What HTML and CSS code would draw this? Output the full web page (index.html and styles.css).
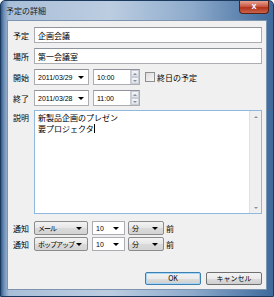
FILE: index.html
```html
<!DOCTYPE html>
<html lang="ja">
<head>
    <meta charset="UTF-8">
    <title>予定の詳細</title>
    <link rel="stylesheet" href="styles.css">
</head>
<body>
    <div class="window">
        <div class="titlebar">
            <span class="title">予定の詳細</span>
            <span class="close">x</span>
        </div>
        <div class="client">
            <div class="row">
                <span class="label">予定</span>
                <div class="field wide">企画会議</div>
            </div>
            <div class="row">
                <span class="label">場所</span>
                <div class="field wide">第一会議室</div>
            </div>
            <div class="row">
                <span class="label">開始</span>
                <div class="field date">2011/03/29<span class="arrow"></span></div>
                <div class="field time">10:00<span class="spin"><i class="up"></i><i class="down"></i></span></div>
                <span class="check"></span>
                <span class="check-label">終日の予定</span>
            </div>
            <div class="row">
                <span class="label">終了</span>
                <div class="field date">2011/03/28<span class="arrow"></span></div>
                <div class="field time">11:00<span class="spin"><i class="up"></i><i class="down"></i></span></div>
            </div>
            <div class="row memo-row">
                <span class="label">説明</span>
                <div class="memo">
                    <div class="memo-text">新製品企画のプレゼン<br>要プロジェクタ<span class="caret"></span></div>
                    <div class="scroll"><i class="up"></i><i class="down"></i></div>
                </div>
            </div>
            <div class="row notify">
                <span class="label">通知</span>
                <div class="select kind">メール<span class="arrow"></span></div>
                <div class="select num">10<span class="arrow"></span></div>
                <div class="select unit">分<span class="arrow"></span></div>
                <span class="before">前</span>
            </div>
            <div class="row notify">
                <span class="label">通知</span>
                <div class="select kind">ポップアップ<span class="arrow"></span></div>
                <div class="select num">10<span class="arrow"></span></div>
                <div class="select unit">分<span class="arrow"></span></div>
                <span class="before">前</span>
            </div>
            <div class="buttons">
                <button class="btn default">OK</button>
                <button class="btn">キャンセル</button>
            </div>
        </div>
    </div>
</body>
</html>
```

FILE: styles.css
```css
body {
    margin: 0;
    font-family: "Noto Sans CJK JP", "Liberation Sans", sans-serif;
    font-size: 8px;
    color: #000;
}
.window {
    width: 274px;
    height: 297px;
    box-sizing: border-box;
    display: flex;
    flex-direction: column;
    background: linear-gradient(90deg, #2f5d92 0, #6f8fb5 3px, #a9bfd8 8px, #bccde1 40%, #8eabcc 70%, #3f6a9c 100%);
    border: 1px solid #1b3a5e;
    border-radius: 5px 5px 0 0;
}
.titlebar {
    height: 19px;
    display: flex;
    justify-content: space-between;
    align-items: flex-start;
    padding: 0 4px 0 5px;
}
.title {
    margin-top: 4px;
    color: #1a1a1a;
    font-size: 8px;
}
.close {
    width: 30px;
    height: 13px;
    line-height: 11px;
    text-align: center;
    color: #fff;
    font-family: "Liberation Sans", sans-serif;
    font-weight: bold;
    font-size: 9px;
    background: linear-gradient(#e7a391, #c85a44 45%, #b3321b 55%, #c9654c);
    border: 1px solid #5b1f14;
    border-top: none;
    border-radius: 0 0 4px 4px;
    box-sizing: border-box;
}
.client {
    flex: 1;
    margin: 0 6px 6px 6px;
    background: #f0f0f0;
    border: 1px solid #7c94b0;
    display: flex;
    flex-direction: column;
    padding: 6px 4px 4px 5px;
}
.row {
    display: flex;
    align-items: center;
    height: 16px;
    margin-bottom: 5px;
    white-space: nowrap;
}
.label {
    width: 21px;
    flex: none;
}
.field {
    height: 16px;
    box-sizing: border-box;
    background: #fff;
    border: 1px solid #abadb3;
    border-top-color: #8f949c;
    display: flex;
    align-items: center;
    padding-left: 3px;
    font-family: "Liberation Sans", "Noto Sans CJK JP", sans-serif;
    font-size: 7px;
}
.wide {
    width: 228px;
    font-family: "Noto Sans CJK JP", sans-serif;
    font-size: 8px;
}
.date {
    width: 55px;
    justify-content: space-between;
    padding-right: 4px;
}
.time {
    width: 47px;
    margin-left: 4px;
    justify-content: space-between;
    padding-right: 0;
}
.arrow {
    width: 0;
    height: 0;
    flex: none;
    border-left: 3px solid transparent;
    border-right: 3px solid transparent;
    border-top: 3px solid #000;
}
.spin {
    width: 8px;
    height: 14px;
    display: flex;
    flex-direction: column;
    border-left: 1px solid #c8ccd2;
}
.spin i, .scroll i {
    flex: 1;
    background: linear-gradient(#f4f6f8, #dfe3e8);
    border: 1px solid #c9ced6;
    position: relative;
}
.spin i::after, .scroll i::after {
    content: "";
    position: absolute;
    left: 50%;
    top: 50%;
    margin: -1px 0 0 -2px;
    border-left: 2px solid transparent;
    border-right: 2px solid transparent;
}
.spin .up::after, .scroll .up::after {
    border-bottom: 2px solid #8a9099;
}
.spin .down::after, .scroll .down::after {
    border-top: 2px solid #8a9099;
}
.check {
    width: 8px;
    height: 8px;
    margin-left: 5px;
    border: 1px solid #8e8f8f;
    background: linear-gradient(135deg, #dcdcdc, #f6f6f6);
}
.check-label {
    margin-left: 2px;
}
.memo-row {
    height: 104px;
    align-items: flex-start;
    margin-top: -1px;
    margin-bottom: 7px;
}
.memo-row .label {
    margin-top: 2px;
}
.memo {
    width: 228px;
    height: 104px;
    box-sizing: border-box;
    background: #fff;
    border: 1px solid #8fb8de;
    display: flex;
}
.memo-text {
    flex: 1;
    padding: 1px 3px;
    line-height: 11px;
}
.caret {
    display: inline-block;
    width: 1px;
    height: 9px;
    background: #000;
    vertical-align: -1px;
}
.scroll {
    width: 11px;
    background: #efefef;
    border-left: 1px solid #e0e0e0;
    display: flex;
    flex-direction: column;
    justify-content: space-between;
}
.scroll i {
    flex: none;
    height: 11px;
    background: #efefef;
    border: none;
}
.notify {
    height: 14px;
    margin-bottom: 2px;
}
.select {
    height: 14px;
    box-sizing: border-box;
    border: 1px solid #8b8b8b;
    border-radius: 2px;
    background: linear-gradient(#f3f3f3, #e6e6e6 50%, #dadada 51%, #d4d4d4);
    display: flex;
    align-items: center;
    justify-content: space-between;
    padding: 0 5px 0 3px;
    font-size: 7px;
    overflow: hidden;
}
.kind {
    width: 54px;
    letter-spacing: -1px;
}
.num {
    width: 33px;
    margin-left: 4px;
    background: #fff;
    border-color: #abadb3;
    border-radius: 0;
    font-family: "Liberation Sans", sans-serif;
}
.unit {
    width: 36px;
    margin-left: 3px;
}
.before {
    margin-left: 2px;
}
.buttons {
    margin-top: auto;
    display: flex;
    justify-content: flex-end;
    gap: 5px;
}
.btn {
    width: 56px;
    height: 13px;
    padding: 0;
    font-family: "Noto Sans CJK JP", sans-serif;
    font-size: 7px;
    line-height: 11px;
    color: #000;
    border: 1px solid #707070;
    border-radius: 2px;
    background: linear-gradient(#f2f2f2, #ebebeb 50%, #dddddd 51%, #cfcfcf);
}
.btn.default {
    border-color: #3c7fb1;
    box-shadow: inset 0 0 0 1px #a6d5f5;
}
```
